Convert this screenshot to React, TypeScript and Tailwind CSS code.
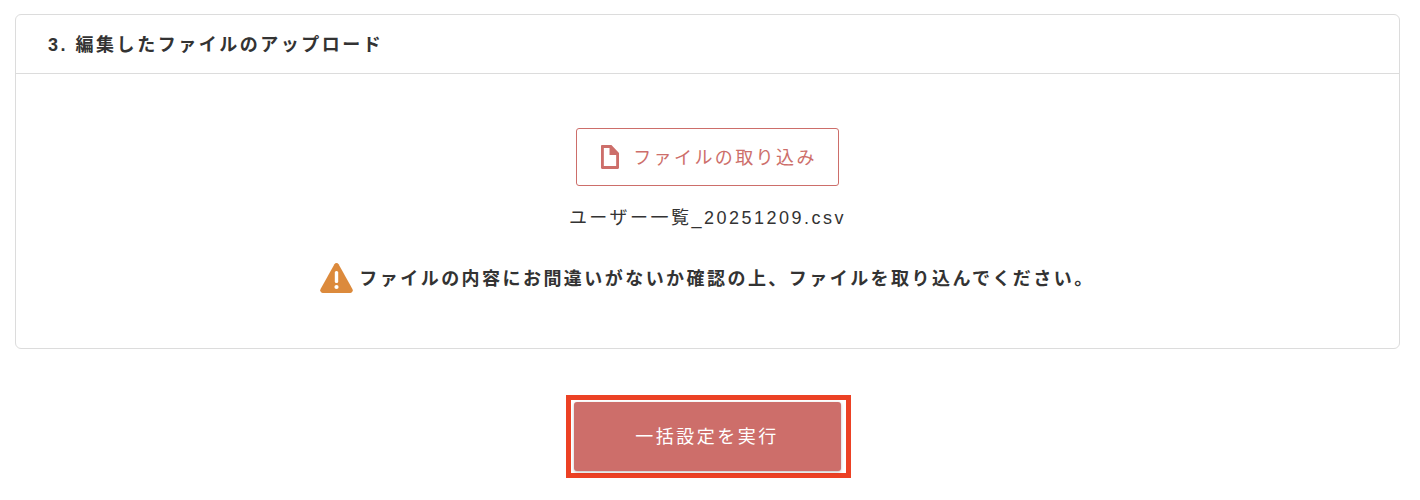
import React from 'react'

const FONT = "font-['Liberation_Sans','Noto_Sans_CJK_JP',sans-serif]"

const FileIcon = () => (
  <svg width="18" height="24" viewBox="0 0 19 24" preserveAspectRatio="none" className="flex-shrink-0">
    <path
      fillRule="evenodd"
      fill="#cd6e6a"
      d="M1.2 0H11L19 8V22.8C19 23.5 18.5 24 17.8 24H1.2C0.5 24 0 23.5 0 22.8V1.2C0 0.5 0.5 0 1.2 0ZM3 3V21H16V10H9V3Z"
    />
    <path fill="#cd6e6a" d="M11.5 2.5L17 8H11.5Z" />
  </svg>
)

const WarningIcon = () => (
  <svg width="33" height="30" viewBox="0 0 33 30" className="flex-shrink-0 mb-[2px]">
    <path
      fill="#dc8a3c"
      d="M14.4 1.3C15.4 -0.4 17.6 -0.4 18.6 1.3L32.4 26C33.4 27.8 32.2 30 30.2 30H2.8C0.8 30 -0.4 27.8 0.6 26Z"
    />
    <rect x="14.8" y="8" width="3.4" height="12" rx="1.5" fill="#ffffff" />
    <circle cx="16.5" cy="24" r="2.1" fill="#ffffff" />
  </svg>
)

export default function App() {
  return (
    <div className={`${FONT} w-[1420px] h-[500px] bg-white text-[#333333] pt-[14px] pl-[15px]`}>
      <div className="w-[1385px] h-[335px] border border-[#dcdcdc] rounded-[6px]">
        <div className="h-[59px] border-b border-[#dcdcdc] pl-[32px] pt-[3px] flex items-center">
          <h2 className="text-[18px] font-bold tracking-[2.52px]">3. 編集したファイルのアップロード</h2>
        </div>
        <div className="flex flex-col items-center pt-[54px]">
          <button className="w-[263px] h-[58px] border border-[#cd6e6a] rounded-[3px] pl-[3px] flex items-center justify-center gap-[14px] text-[#cd6e6a] text-[18px] tracking-[2.4px]">
            <FileIcon />
            <span className="pt-[2px]">ファイルの取り込み</span>
          </button>
          <p className="mt-[19px] text-[18px] leading-[26px] tracking-[2.5px]">ユーザー一覧_20251209.csv</p>
          <div className="mt-[32px] flex items-center gap-[6px]">
            <WarningIcon />
            <span className="text-[18px] font-bold tracking-[2.45px]">
              ファイルの内容にお間違いがないか確認の上、ファイルを取り込んでください。
            </span>
          </div>
        </div>
      </div>
      <div className="w-[1385px] flex justify-center pl-[1px] mt-[46px]">
        <div className="w-[285px] h-[83px] border-[5px] border-[#ec4124] flex items-center pl-[3px]">
          <button className="w-[267px] h-[69px] bg-[#cd6e6a] rounded-[3px] pt-[2px] shadow-[0_1px_3px_rgba(0,0,0,0.25)] text-white text-[18px] tracking-[2.5px]">
            一括設定を実行
          </button>
        </div>
      </div>
    </div>
  )
}
